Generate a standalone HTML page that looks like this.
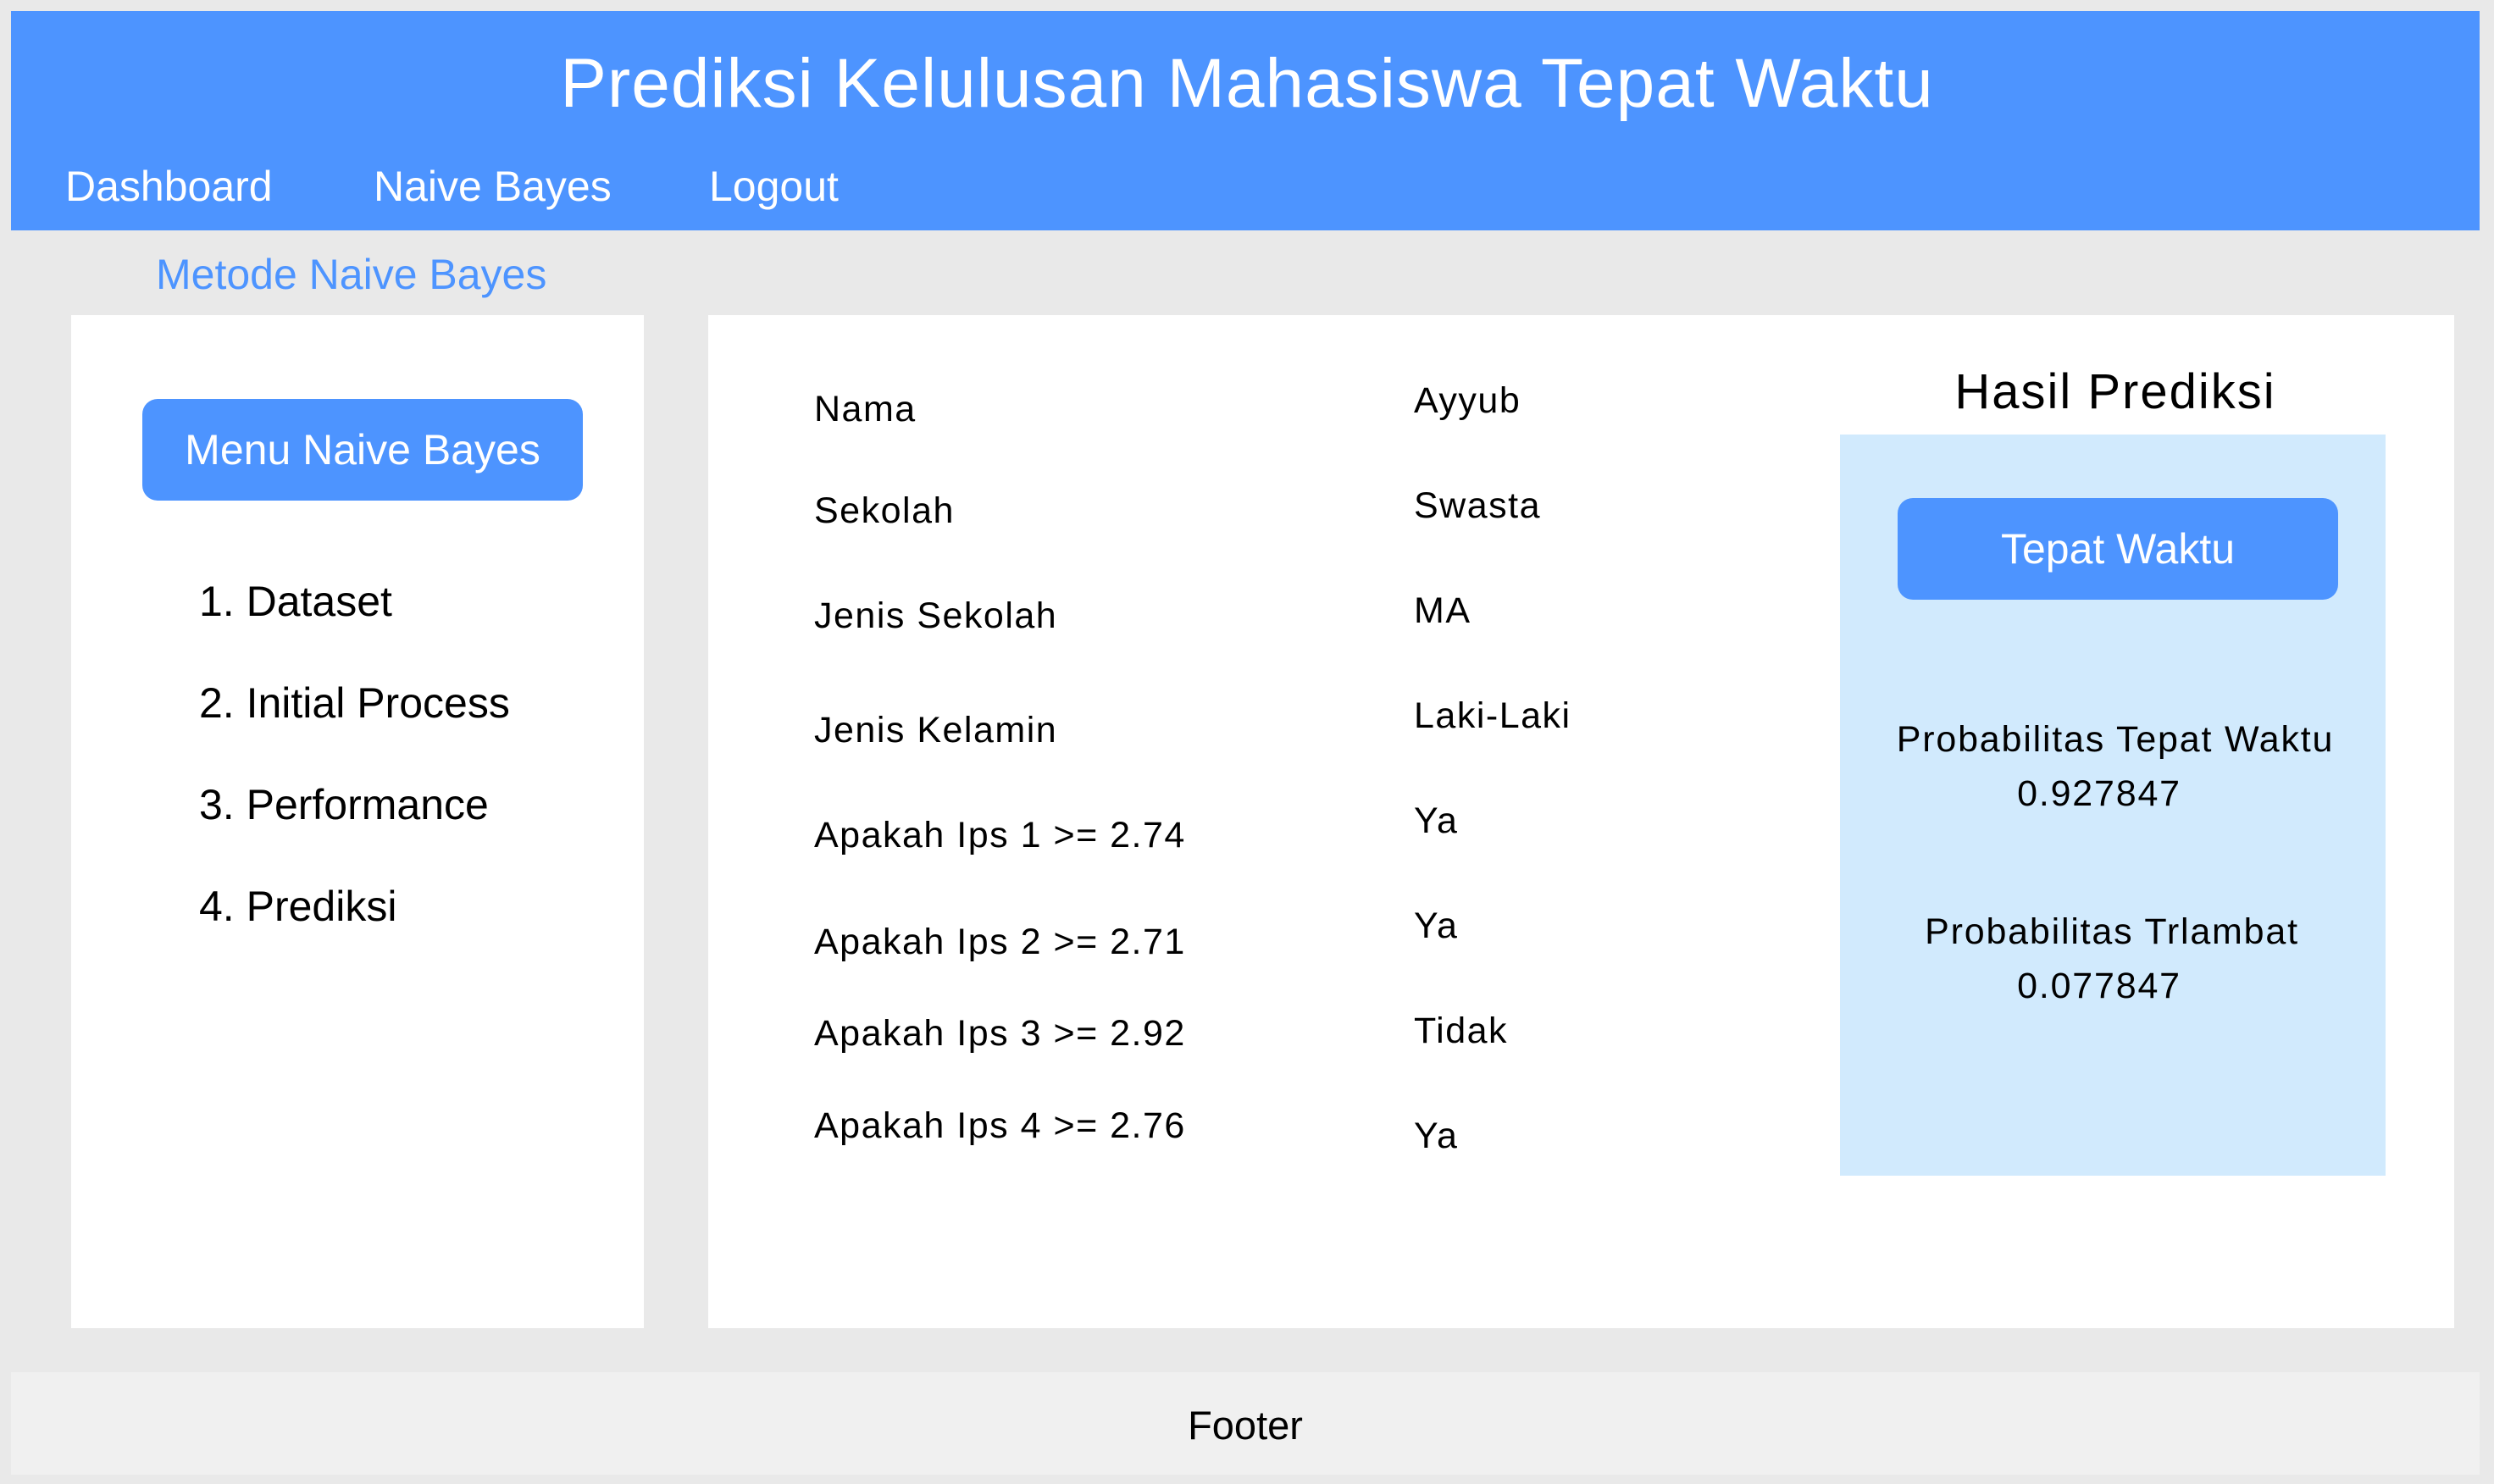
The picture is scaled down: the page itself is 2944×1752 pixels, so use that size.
<!DOCTYPE html>
<html><head><meta charset="utf-8"><style>
*{margin:0;padding:0;box-sizing:border-box}
body{width:2944px;height:1752px;background:#e9e9e9;font-family:"Liberation Sans",sans-serif;position:relative;overflow:hidden;color:#000}
.a{position:absolute;line-height:1;white-space:nowrap}
.hdr{position:absolute;left:13px;top:13px;width:2914px;height:259px;background:#4d94ff}
.card{position:absolute;background:#fff;top:372px;height:1196px}
.btn{position:absolute;background:#4d94ff;border-radius:18px;color:#fff;display:flex;align-items:center;justify-content:center;font-size:50px}
.r{font-size:43px;letter-spacing:1.5px}
.c{text-align:center;transform:translateX(-50%)}
.p{letter-spacing:1.8px}
</style></head><body>
<div class="hdr"></div>
<div class="a c" style="left:1472px;top:58px;font-size:82px;color:#fff;letter-spacing:1px">Prediksi Kelulusan Mahasiswa Tepat Waktu</div>
<div class="a" style="left:77px;top:195px;font-size:50px;color:#fff">Dashboard</div>
<div class="a" style="left:441px;top:195px;font-size:50px;color:#fff">Naive Bayes</div>
<div class="a" style="left:837px;top:195px;font-size:50px;color:#fff">Logout</div>
<div class="a" style="left:184px;top:299px;font-size:50px;color:#4d94ff">Metode Naive Bayes</div>

<div class="card" style="left:84px;width:676px"></div>
<div class="card" style="left:836px;width:2061px"></div>

<div class="btn" style="left:168px;top:471px;width:520px;height:120px">Menu Naive Bayes</div>
<div class="a" style="left:235px;top:685px;font-size:50px">1. Dataset</div>
<div class="a" style="left:235px;top:805px;font-size:50px">2. Initial Process</div>
<div class="a" style="left:235px;top:925px;font-size:50px">3. Performance</div>
<div class="a" style="left:235px;top:1045px;font-size:50px">4. Prediksi</div>

<div class="a r" style="left:961px;top:462px">Nama</div>
<div class="a r" style="left:961px;top:582px">Sekolah</div>
<div class="a r" style="left:961px;top:706px">Jenis Sekolah</div>
<div class="a r" style="left:961px;top:841px">Jenis Kelamin</div>
<div class="a r" style="left:961px;top:965px">Apakah Ips 1 &gt;= 2.74</div>
<div class="a r" style="left:961px;top:1091px">Apakah Ips 2 &gt;= 2.71</div>
<div class="a r" style="left:961px;top:1199px">Apakah Ips 3 &gt;= 2.92</div>
<div class="a r" style="left:961px;top:1308px">Apakah Ips 4 &gt;= 2.76</div>

<div class="a r" style="left:1669px;top:452px">Ayyub</div>
<div class="a r" style="left:1669px;top:576px">Swasta</div>
<div class="a r" style="left:1669px;top:700px">MA</div>
<div class="a r" style="left:1669px;top:824px">Laki-Laki</div>
<div class="a r" style="left:1669px;top:948px">Ya</div>
<div class="a r" style="left:1669px;top:1072px">Ya</div>
<div class="a r" style="left:1669px;top:1196px">Tidak</div>
<div class="a r" style="left:1669px;top:1320px">Ya</div>

<div class="a c" style="left:2497px;top:434px;font-size:58px;letter-spacing:2px">Hasil Prediksi</div>
<div style="position:absolute;left:2172px;top:513px;width:644px;height:875px;background:#d1eafd"></div>
<div class="btn" style="left:2240px;top:588px;width:520px;height:120px">Tepat Waktu</div>
<div class="a r c p" style="left:2497px;top:852px">Probabilitas Tepat Waktu</div>
<div class="a r c p" style="left:2478px;top:916px">0.927847</div>
<div class="a r c p" style="left:2493px;top:1079px">Probabilitas Trlambat</div>
<div class="a r c p" style="left:2478px;top:1143px">0.077847</div>

<div style="position:absolute;left:13px;top:1620px;width:2914px;height:121px;background:#f0f0f0"></div>
<div class="a c" style="left:1470px;top:1659px;font-size:47px">Footer</div>
</body></html>
